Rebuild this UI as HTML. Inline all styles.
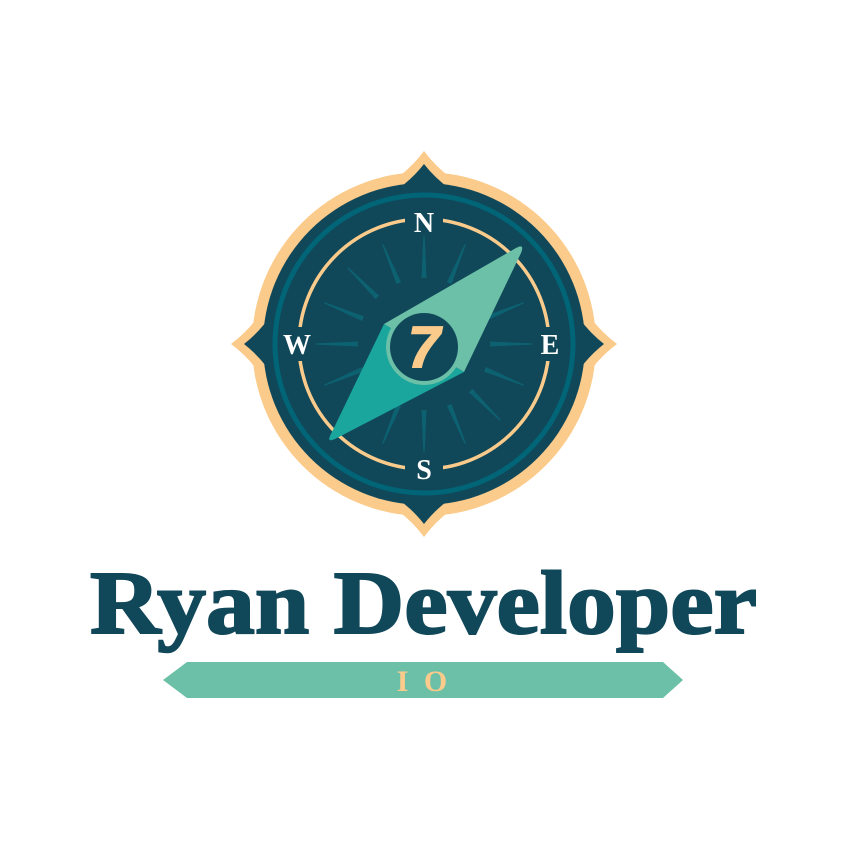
<!DOCTYPE html>
<html><head><meta charset="utf-8"><style>html,body{margin:0;padding:0;background:#fff}svg{display:block}</style></head><body>
<svg width="851" height="851" viewBox="0 0 851 851" xmlns="http://www.w3.org/2000/svg">
<defs>
<g id="spike">
<path d="M-60,-150 Q-25,-160 0,-193 Q25,-160 60,-150 Z"/>
</g>
<g id="spike2">
<path d="M-55,-140 Q-22,-152 0,-180 Q22,-152 55,-140 Z"/>
</g>
<path id="tk" d="M-2.5,-66 L2.5,-66 L0.6,-108 L-0.6,-108 Z"/>
</defs>
<g transform="translate(424,344)">
<g fill="#fbcb8c">
<circle r="172"/>
<use href="#spike"/><use href="#spike" transform="rotate(90)"/><use href="#spike" transform="rotate(180)"/><use href="#spike" transform="rotate(270)"/>
</g>
<g fill="#10485a">
<circle r="161"/>
<use href="#spike2"/><use href="#spike2" transform="rotate(90)"/><use href="#spike2" transform="rotate(180)"/><use href="#spike2" transform="rotate(270)"/>
</g>
<circle r="149" fill="none" stroke="#006577" stroke-width="5"/>
<circle r="125" fill="none" stroke="#fbcb8c" stroke-width="3.5"/>
<rect x="-19" y="-140" width="38" height="30" fill="#10485a"/>
<rect x="-19" y="110" width="38" height="30" fill="#10485a"/>
<rect x="-140" y="-17" width="30" height="34" fill="#10485a"/>
<rect x="110" y="-17" width="30" height="34" fill="#10485a"/>
<g fill="#0d6272">
<use href="#tk"/>
<use href="#tk" transform="rotate(22.5)"/>
<use href="#tk" transform="rotate(45)"/>
<use href="#tk" transform="rotate(67.5)"/>
<use href="#tk" transform="rotate(90)"/>
<use href="#tk" transform="rotate(112.5)"/>
<use href="#tk" transform="rotate(135)"/>
<use href="#tk" transform="rotate(157.5)"/>
<use href="#tk" transform="rotate(180)"/>
<use href="#tk" transform="rotate(202.5)"/>
<use href="#tk" transform="rotate(225)"/>
<use href="#tk" transform="rotate(247.5)"/>
<use href="#tk" transform="rotate(270)"/>
<use href="#tk" transform="rotate(292.5)"/>
<use href="#tk" transform="rotate(315)"/>
<use href="#tk" transform="rotate(337.5)"/>
</g>
<!-- needle -->
<path d="M-40,-20 L92,-96 Q101,-101 97,-91 L40,28 Z" fill="#6cc0a8"/>
<path d="M-40,-20 L-93,90 Q-98,99 -89,95 L40,28 Z" fill="#1aa69c"/>
<circle cx="0" cy="3" r="38" fill="#6cc0a8"/>
<circle cx="0" cy="3" r="34" fill="#10485a"/>
<text x="0" y="23" text-anchor="middle" font-family="Liberation Sans, sans-serif" font-weight="bold" font-style="italic" font-size="58" fill="#fbcb8c" stroke="#fbcb8c" stroke-width="1.5">7</text>
<g font-family="Liberation Serif, serif" font-weight="bold" font-size="28" fill="#fff" text-anchor="middle">
<text x="0" y="-112">N</text>
<text x="0" y="135">S</text>
<text x="-127" y="10">W</text>
<text x="126" y="10">E</text>
</g>
</g>
<text x="90" y="633" textLength="667" lengthAdjust="spacingAndGlyphs" font-family="Liberation Serif, serif" font-weight="bold" font-size="90" fill="#10485a" stroke="#10485a" stroke-width="2">Ryan Developer</text>
<polygon points="163,680 187,662 663,662 683,680 663,698 187,698" fill="#6cc0a8"/>
<text x="424" y="691" text-anchor="middle" font-family="Liberation Serif, serif" font-weight="bold" font-size="30" fill="#fbcb8c" letter-spacing="4">I O</text>
</svg>
</body></html>
